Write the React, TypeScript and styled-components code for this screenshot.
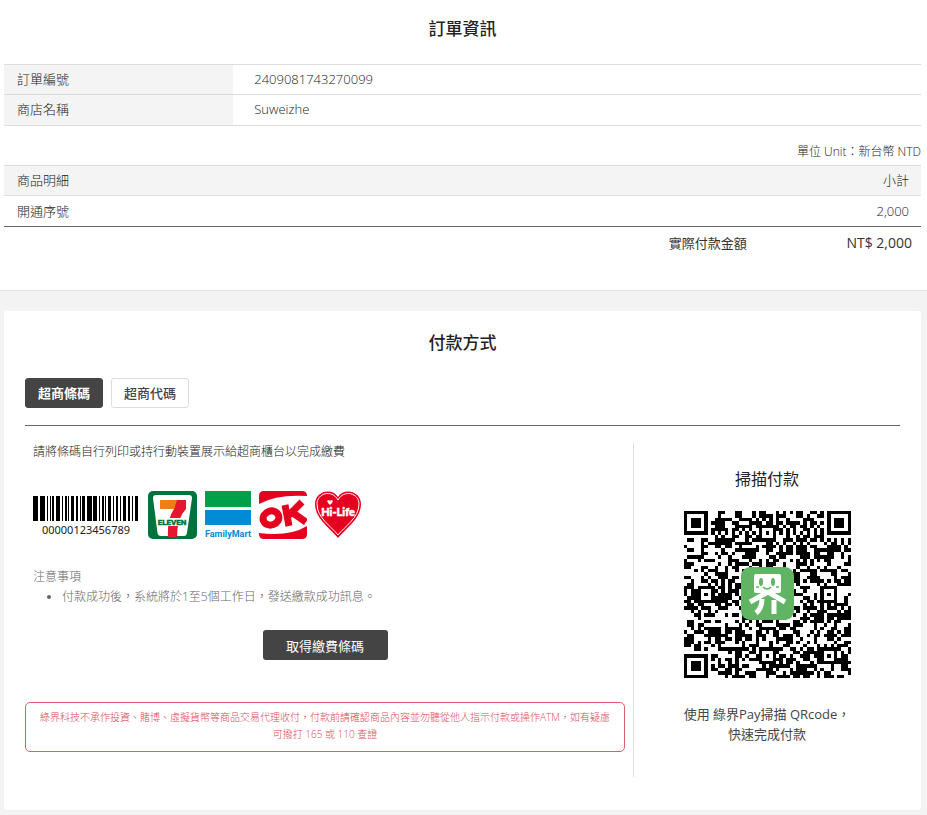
import React from "react";
import styled, { createGlobalStyle, css } from "styled-components";

const GlobalStyle = createGlobalStyle`
  *, *::before, *::after { box-sizing: border-box; }
  body {
    margin: 0;
    background: #f3f3f3;
    color: #222;
    font-family: "Open Sans", "Noto Sans CJK TC", sans-serif;
    font-size: 13px;
    font-weight: 300;
    line-height: 20px;
  }
`;

const OrderSection = styled.section`
  background: #fff;
  border-bottom: 1px solid #e6e6e6;
  padding: 17px 6px 31px 4px;
`;

const SectionTitle = styled.h2`
  margin: 0;
  font-size: 17px;
  line-height: 24px;
  font-weight: 500;
  color: #222;
  text-align: center;
`;

const InfoTable = styled.table`
  width: 100%;
  margin-top: 23px;
  border-collapse: collapse;
  border-top: 1px solid #ddd;
  tr { border-bottom: 1px solid #ddd; }
  th, td { height: 30px; padding: 0 21px 2px; text-align: left; font-weight: 300; }
  th { width: 25%; padding: 0 13px 2px; background: #f4f4f4; }
  tr:last-child td { height: 31px; }
`;

const UnitNote = styled.p`
  margin: 16px 0 3px;
  font-size: 12px;
  text-align: right;
`;

const ItemTable = styled.table`
  width: 100%;
  border-collapse: collapse;
  th, td { height: 30px; padding: 0 12px 1px 13px; font-weight: 300; text-align: left; }
  th:last-child, td:last-child { width: 19%; text-align: right; }
  thead tr { background: #f4f4f4; border-top: 1px solid #ddd; border-bottom: 1px solid #ddd; }
  tbody tr { border-bottom: 1px solid #666; }
  tbody td { height: 31px; }
  tfoot th, tfoot td { height: 32px; padding: 0 9px 0 0; font-weight: 400; color: #333; }
  tfoot th { padding: 0; text-align: right; }
  tfoot td { font-size: 14px; }
`;

const PaymentCard = styled.section`
  margin: 20px 6px 5px 4px;
  padding: 20px 21px 33px;
  border-radius: 3px;
  background: #fff;
`;

const TabBar = styled.div`
  display: flex;
  gap: 8px;
  margin-top: 23px;
  padding-bottom: 17px;
  border-bottom: 1px solid #666;
`;

const Tab = styled.button<{ $active?: boolean }>`
  height: 30px;
  padding: 0 12px;
  border: 1px solid #ddd;
  border-radius: 3px;
  background: #fff;
  color: #444;
  font: 500 13px/28px "Open Sans", "Noto Sans CJK TC", sans-serif;
  ${(p) => p.$active && css`
    border-color: #444;
    background: #444;
    color: #fff;
    font-weight: 700;
  `}
`;

const PaymentBody = styled.div`
  display: grid;
  grid-template-columns: minmax(0, 1fr) 267px;
  margin-top: 17px;
`;

const StorePane = styled.div`
  display: flex;
  flex-direction: column;
  padding-right: 8px;
`;

const Instruction = styled.p`
  margin: 0;
  padding: 0 8px;
  font-size: 12px;
  line-height: 17px;
`;

const Brands = styled.div`
  display: flex;
  align-items: center;
  gap: 7px;
  margin-top: 30px;
  padding-left: 8px;
  svg { display: block; }
`;

const Notes = styled.div`
  margin-top: 27px;
  padding: 0 8px;
  color: #666;
  font-size: 12px;
  line-height: 20px;
  ul { margin: 0; padding-left: 29px; }
`;

const SubmitButton = styled.button`
  align-self: center;
  width: 125px;
  height: 30px;
  margin-top: 23px;
  border: 0;
  border-radius: 3px;
  background: #444;
  color: #fff;
  font: 400 13px/30px "Open Sans", "Noto Sans CJK TC", sans-serif;
`;

const Warning = styled.p`
  margin: 42px 0 0;
  padding: 6px 12px 8px;
  border: 1px solid #d9616d;
  border-radius: 5px;
  color: #e04858;
  font-size: 10px;
  line-height: 17px;
  text-align: center;
`;

const ScanPane = styled.aside`
  display: flex;
  flex-direction: column;
  align-items: center;
  min-height: 334px;
  padding-top: 24px;
  border-left: 1px solid #ddd;
  text-align: center;
  svg { display: block; }
  p { margin: 26px 0 0; font-weight: 400; color: #444; }
`;

const ScanTitle = styled.h3`
  margin: 0 0 20px;
  font-size: 16px;
  line-height: 24px;
  font-weight: 400;
  color: #222;
`;

const BARS = [
  [0, 5], [7, 5], [14, 1], [17, 1], [19, 2], [23, 4], [29, 1], [32, 2], [35, 1],
  [38, 3], [43, 2], [47, 1], [49, 3], [54, 5], [60, 4], [66, 1], [69, 2], [72, 1],
  [75, 3], [80, 1], [83, 2], [87, 1], [90, 3], [95, 2], [99, 1], [102, 3],
];

function Barcode() {
  return (
    <svg width="108" height="50" viewBox="0 0 108 50" role="img" aria-label="Barcode">
      {BARS.map(([x, w]) => <rect key={x} x={x} y="6" width={w} height="25" fill="#000" />)}
      <text x="53" y="44" fontFamily="Noto Sans" fontSize="11" fontWeight="400" fill="#222" textAnchor="middle">00000123456789</text>
    </svg>
  );
}

function SevenEleven() {
  return (
    <svg width="49" height="50" viewBox="0 0 49 50" role="img" aria-label="7-ELEVEN">
      <rect y="1" width="49" height="48" rx="5" fill="#00723b" />
      <path d="M8 5h33q3 0 3 3l-5 35q-.5 3-3 3H13q-3 0-3.500-3L5 8q0-3 3-3z" fill="#fff" />
      <path d="M12 10h18l-4 9H12z" fill="#ef7d1a" />
      <path d="M29 10h9v9q-9 9-9 28H20q-1-18 6-28z" fill="#e5172f" />
      <path d="M9 28h31v8H9z" fill="#fff" />
      <text x="24" y="35" fontFamily="Roboto" fontSize="8" fontWeight="900" fill="#00723b" stroke="#00723b" strokeWidth=".3" textAnchor="middle">ELEVEN</text>
    </svg>
  );
}

function FamilyMart() {
  return (
    <svg width="48" height="50" viewBox="0 0 48 50" role="img" aria-label="FamilyMart">
      <rect x="1" y="1" width="46" height="16" fill="#00a04a" />
      <rect x="1" y="20" width="46" height="15" fill="#008bd5" />
      <text x="24" y="47" fontFamily="Roboto" fontSize="9" fontWeight="700" fill="#008bd5" textAnchor="middle">FamilyMart</text>
    </svg>
  );
}

function OkMart() {
  return (
    <svg width="48" height="50" viewBox="0 0 48 50" role="img" aria-label="OK">
      <path d="M0 12V6Q0 1 5 1H43Q48 1 48 6Q18 4 0 14z" fill="#e60020" />
      <path d="M0 43Q30 47 48 36V44Q48 49 43 49H5Q0 49 0 44z" fill="#e60020" />
      <g fill="none" stroke="#e60020" strokeWidth="7">
        <ellipse cx="12" cy="28" rx="8" ry="7" transform="rotate(-20 12 28)" />
        <path d="M26 15l4 21M43 12L29 26M34 23l13 9" />
      </g>
    </svg>
  );
}

function HiLife() {
  return (
    <svg width="48" height="50" viewBox="0 0 48 50" role="img" aria-label="Hi-Life">
      <path d="M24 48C17 39 1 29 1 14C1 1 18-3 24 7C30-3 47 1 47 14C47 29 31 39 24 48z" fill="#e60020" />
      <path d="M24 45C17 36 3 28 3 14C3 3 18-1 24 10C30-1 45 3 45 14C45 28 31 36 24 45z" fill="none" stroke="#fff" strokeWidth="1" />
      <path d="M14 13q-2-3 1-3l1 1 1-1q3 0 1 3l-2 2z" fill="#fff" />
      <text x="24" y="26" fontFamily="Lato" fontSize="11" fontWeight="900" fill="#fff" stroke="#fff" strokeWidth=".5" textAnchor="middle">Hi-Life</text>
    </svg>
  );
}

const QR_SIZE = 49;

function isDark(x: number, y: number): boolean {
  const last = QR_SIZE - 1;
  const finders = [[3, 3], [last - 3, 3], [3, last - 3]];
  for (const [cx, cy] of finders) {
    const d = Math.max(Math.abs(x - cx), Math.abs(y - cy));
    if (d <= 4) return d !== 2 && d !== 4;
  }
  const centres = [[24, 6], [6, 24], [42, 24], [24, 42], [42, 42]];
  for (const [cx, cy] of centres) {
    const d = Math.max(Math.abs(x - cx), Math.abs(y - cy));
    if (d <= 2) return d !== 1;
  }
  if (y === 6) return x % 2 === 0;
  if (x === 6) return y % 2 === 0;
  let h = Math.imul(x + 11, 374761393) ^ Math.imul(y + 29, 668265263);
  h = Math.imul(h ^ (h >>> 13), 1274126177);
  return ((h ^ (h >>> 16)) & 255) < 132;
}

const QR_PATH = Array.from({ length: QR_SIZE * QR_SIZE }, (_, i) => [i % QR_SIZE, Math.floor(i / QR_SIZE)])
  .filter(([x, y]) => isDark(x, y))
  .map(([x, y]) => `M${x} ${y}h1v1h-1z`)
  .join("");

function QrCode() {
  return (
    <svg width="167" height="167" viewBox="0 0 167 167" role="img" aria-label="QR code">
      <svg width="167" height="167" viewBox="0 0 49 49" shapeRendering="crispEdges">
        <path d={QR_PATH} fill="#000" />
      </svg>
      <g transform="translate(57 56)">
        <rect width="53" height="53" rx="9" fill="#60b463" />
        <rect x="13" y="7" width="27" height="19" rx="2" fill="#fff" />
        <ellipse cx="20" cy="15" rx="2" ry="4" fill="#60b463" />
        <ellipse cx="32" cy="15" rx="2" ry="4" fill="#60b463" />
        <path d="M22 20q4 4 8 0M15 20h3M35 20h3" fill="none" stroke="#60b463" strokeWidth="1.500" />
        <path d="M27 25L9 35M27 25l17 10M21 32q0 9-6 14M33 33v14" fill="none" stroke="#fff" strokeWidth="5" />
      </g>
    </svg>
  );
}

export default function App() {
  return (
    <>
      <GlobalStyle />
      <main>
        <OrderSection>
          <SectionTitle>訂單資訊</SectionTitle>
          <InfoTable>
            <tbody>
              <tr><th scope="row">訂單編號</th><td>2409081743270099</td></tr>
              <tr><th scope="row">商店名稱</th><td>Suweizhe</td></tr>
            </tbody>
          </InfoTable>
          <UnitNote>單位 Unit：新台幣 NTD</UnitNote>
          <ItemTable>
            <thead><tr><th scope="col">商品明細</th><th scope="col">小計</th></tr></thead>
            <tbody><tr><td>開通序號</td><td>2,000</td></tr></tbody>
            <tfoot><tr><th scope="row">實際付款金額</th><td>NT$ 2,000</td></tr></tfoot>
          </ItemTable>
        </OrderSection>
        <PaymentCard>
          <SectionTitle>付款方式</SectionTitle>
          <TabBar>
            <Tab type="button" $active>超商條碼</Tab>
            <Tab type="button">超商代碼</Tab>
          </TabBar>
          <PaymentBody>
            <StorePane>
              <Instruction>請將條碼自行列印或持行動裝置展示給超商櫃台以完成繳費</Instruction>
              <Brands>
                <Barcode />
                <SevenEleven />
                <FamilyMart />
                <OkMart />
                <HiLife />
              </Brands>
              <Notes>
                注意事項
                <ul><li>付款成功後，系統將於1至5個工作日，發送繳款成功訊息。</li></ul>
              </Notes>
              <SubmitButton type="button">取得繳費條碼</SubmitButton>
              <Warning>綠界科技不承作投資、賭博、虛擬貨幣等商品交易代理收付，付款前請確認商品內容並勿聽從他人指示付款或操作ATM，如有疑慮可撥打 165 或 110 查證</Warning>
            </StorePane>
            <ScanPane>
              <ScanTitle>掃描付款</ScanTitle>
              <QrCode />
              <p>使用 綠界Pay掃描 QRcode，<br />快速完成付款</p>
            </ScanPane>
          </PaymentBody>
        </PaymentCard>
      </main>
    </>
  );
}
